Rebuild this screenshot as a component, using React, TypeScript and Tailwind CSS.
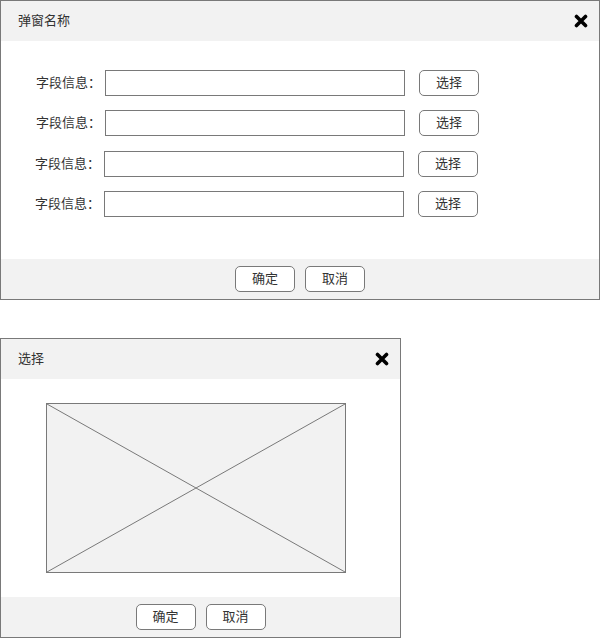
import React from "react";

const font = { fontFamily: '"Noto Sans CJK SC", "Noto Sans", sans-serif' };

const CloseIcon: React.FC = () => (
  <svg width="14" height="14" viewBox="0 0 14 14" className="block">
    <path d="M2.5 2.5 L11.5 11.5 M11.5 2.5 L2.5 11.5" stroke="#000" strokeWidth="3.6" strokeLinecap="round" />
  </svg>
);

const Btn: React.FC<{ text: string }> = ({ text }) => (
  <button className="w-[60px] h-[26px] bg-white border border-[#797979] rounded-[5px] text-[13px] text-[#333] leading-none pb-[3px]">
    {text}
  </button>
);

const Header: React.FC<{ title: string }> = ({ title }) => (
  <div className="h-[40px] bg-[#f2f2f2] flex items-center justify-between pl-[17px] pr-[11px]">
    <span className="text-[13px] leading-[18px] text-[#333] pb-[3px]">{title}</span>
    <CloseIcon />
  </div>
);

const Footer: React.FC = () => (
  <div className="h-[40px] bg-[#f2f2f2] flex items-center justify-center gap-[10px]">
    <Btn text="确定" />
    <Btn text="取消" />
  </div>
);

const Row: React.FC<{ shift?: boolean }> = ({ shift }) => (
  <div className={`h-[26px] flex items-center ${shift ? "pl-[34px]" : "pl-[35px]"}`}>
    <span className="w-[69px] text-[13px] leading-[18px] text-[#333] whitespace-nowrap pb-[2px]">字段信息：</span>
    <div className="w-[300px] h-[26px] border border-[#797979] bg-white" />
    <div className="ml-[14px] flex">
      <Btn text="选择" />
    </div>
  </div>
);

export default function App() {
  return (
    <div className="w-[600px] bg-white" style={font}>
      <div className="w-[600px] h-[300px] border border-[#797979] flex flex-col">
        <Header title="弹窗名称" />
        <div className="flex-1 flex flex-col pt-[29px]">
          <div className="flex flex-col gap-[14px]">
            <Row />
            <Row />
          </div>
          <div className="flex flex-col gap-[14px] mt-[15px]">
            <Row shift />
            <Row shift />
          </div>
        </div>
        <Footer />
      </div>

      <div className="w-[401px] h-[300px] border border-[#797979] flex flex-col mt-[38px]">
        <Header title="选择" />
        <div className="flex-1 flex items-center pl-[45px]">
          <div className="w-[300px] h-[170px] border border-[#797979] bg-[#f2f2f2]">
            <svg width="100%" height="100%" viewBox="0 0 298 168" preserveAspectRatio="none" className="block">
              <line x1="0" y1="0" x2="298" y2="168" stroke="#797979" strokeWidth="1" />
              <line x1="298" y1="0" x2="0" y2="168" stroke="#797979" strokeWidth="1" />
            </svg>
          </div>
        </div>
        <Footer />
      </div>
    </div>
  );
}
